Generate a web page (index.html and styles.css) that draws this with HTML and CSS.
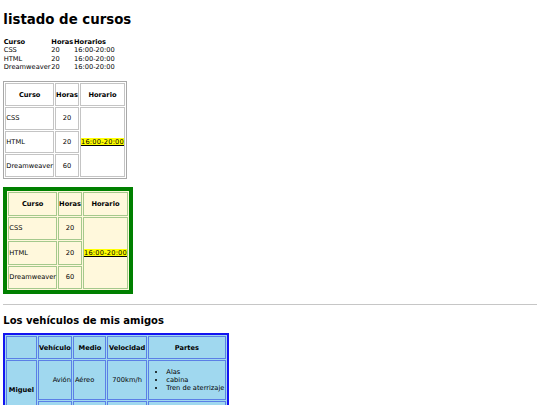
FILE: index.html
```html
<!DOCTYPE html>
<html lang="es">
<head>
<meta charset="utf-8">
<title>listado de cursos</title>
<link rel="stylesheet" href="styles.css">
</head>
<body>
<h1 class="title">listado de cursos</h1>

<table class="plain">
  <tr><th>Curso</th><th>Horas</th><th>Horarios</th></tr>
  <tr><td>CSS</td><td>20</td><td>16:00-20:00</td></tr>
  <tr><td>HTML</td><td>20</td><td>16:00-20:00</td></tr>
  <tr><td>Dreamweaver</td><td>20</td><td>16:00-20:00</td></tr>
</table>

<table class="grid">
  <tr><th>Curso</th><th>Horas</th><th>Horario</th></tr>
  <tr><td>CSS</td><td class="num">20</td><td rowspan="3" class="time"><mark class="hl">16:00-20:00</mark></td></tr>
  <tr><td>HTML</td><td class="num">20</td></tr>
  <tr><td>Dreamweaver</td><td class="num">60</td></tr>
</table>

<table class="grid fancy">
  <tr><th>Curso</th><th>Horas</th><th>Horario</th></tr>
  <tr><td>CSS</td><td class="num">20</td><td rowspan="3" class="time"><mark class="hl">16:00-20:00</mark></td></tr>
  <tr><td>HTML</td><td class="num">20</td></tr>
  <tr><td>Dreamweaver</td><td class="num">60</td></tr>
</table>

<hr class="rule">

<h2 class="subtitle">Los vehículos de mis amigos</h2>

<table class="veh">
  <tr class="head">
    <th></th><th>Vehículo</th><th class="medio">Medio</th><th>Velocidad</th><th>Partes</th>
  </tr>
  <tr>
    <th rowspan="2" class="name">Miguel</th>
    <td class="right">Avión</td>
    <td class="left">Aéreo</td>
    <td class="center">700km/h</td>
    <td class="parts">
      <ul class="list">
        <li>Alas</li>
        <li>cabina</li>
        <li>Tren de aterrizaje</li>
      </ul>
    </td>
  </tr>
  <tr class="second">
    <td></td>
    <td></td>
    <td></td>
    <td></td>
  </tr>
</table>
</body>
</html>
```

FILE: styles.css
```css
html, body {
  background: #ffffff;
}

body {
  margin: 3.33px;
  font-family: "DejaVu Sans", Verdana, sans-serif;
  font-size: 6.67px;
  color: #000000;
}

.title {
  font-size: 13.33px;
  line-height: 15.5px;
  margin: 8.6px 0 10.6px;
  font-weight: bold;
}

.plain {
  border-collapse: separate;
  border-spacing: 0.83px;
}

.plain th,
.plain td {
  padding: 0.1px 0.42px;
  text-align: left;
  line-height: 8.1px;
}

.grid {
  margin-top: 10px;
  border-collapse: separate;
  border-spacing: 1px;
  border: 1px solid #a8a8a8;
}

.grid th,
.grid td {
  border: 1px solid #c4c4c4;
  height: 20.75px;
  padding: 0;
}

.grid th {
  text-align: center;
}

.grid td {
  text-align: left;
}

.grid td.num {
  text-align: center;
}

.grid td.time {
  text-align: left;
  vertical-align: middle;
}

.hl {
  background: #ffff00;
  color: #000000;
  text-decoration: underline;
  letter-spacing: 0.2px;
}

.fancy {
  margin-top: 8px;
  border: 4.5px solid #008000;
  background: #fff8dc;
}

.fancy th,
.fancy td {
  border-color: #a5c98c;
  height: 21.5px;
}

.rule {
  border: 0;
  border-top: 1px solid #c6c6c6;
  margin: 9.5px 0 0;
  height: 0;
}

.subtitle {
  font-size: 10px;
  line-height: 11.64px;
  margin: 10.5px 0 6.7px;
  font-weight: bold;
}

.veh {
  border-collapse: separate;
  border-spacing: 1px;
  border: 2px solid #1414f0;
  background: #a0d8ef;
}

.veh th,
.veh td {
  border: 1px solid #5b7fe6;
  padding: 0 0.5px;
}

.veh .head th {
  height: 21px;
}

.veh th.medio {
  width: 30px;
}

.veh th.name {
  padding: 0 1.5px;
  vertical-align: middle;
}

.veh .second td {
  height: 17px;
}

.veh td.right { text-align: right; }
.veh td.left { text-align: left; }
.veh td.center { text-align: center; }

.veh td.parts {
  text-align: left;
}

.list {
  margin: 6.67px 0;
  padding-left: 17px;
}
```
